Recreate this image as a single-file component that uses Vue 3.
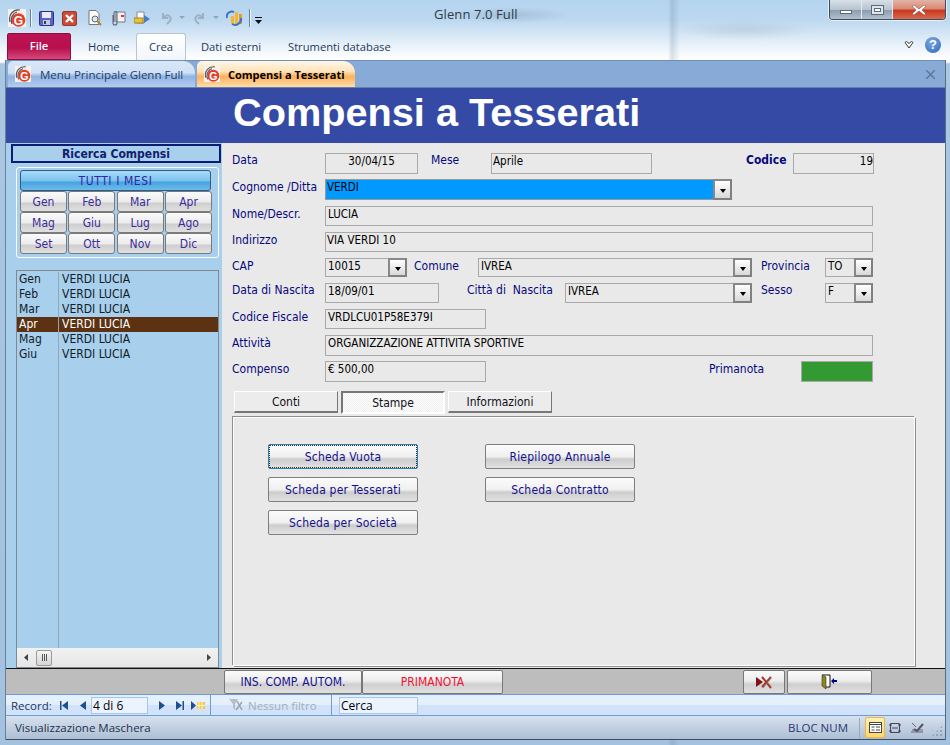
<script setup>
const months = ['Gen','Feb','Mar','Apr','Mag','Giu','Lug','Ago','Set','Ott','Nov','Dic']
const records = [
  { m: 'Gen', n: 'VERDI LUCIA' },
  { m: 'Feb', n: 'VERDI LUCIA' },
  { m: 'Mar', n: 'VERDI LUCIA' },
  { m: 'Apr', n: 'VERDI LUCIA', sel: true },
  { m: 'Mag', n: 'VERDI LUCIA' },
  { m: 'Giu', n: 'VERDI LUCIA' }
]
</script>

<template>
  <div class="window">
    <header class="titlebar">
      <div class="qat">
        <svg class="ic logo" viewBox="0 0 18 18"><rect width="18" height="18" fill="#f4f1ee"/><path d="M2 13C0 6 5 0 12 1M4 15C2 9 5 4 9 3" fill="none" stroke="#555" stroke-width="1.200"/><circle cx="10.500" cy="11" r="6.800" fill="#e0402a"/><text x="10.500" y="15.500" text-anchor="middle" class="g">G</text></svg>
        <i class="sep s1"></i>
        <svg class="ic save" viewBox="0 0 15 15"><rect x=".5" y=".5" width="14" height="14" rx="1" fill="#5a62c8" stroke="#2a2f80"/><rect x="3" y="1" width="9" height="6" fill="#e8ecf8"/><rect x="4" y="9" width="7" height="5" fill="#c6c9d6"/><rect x="5" y="10" width="2" height="3" fill="#33386f"/></svg>
        <svg class="ic del" viewBox="0 0 15 15"><rect x=".5" y=".5" width="14" height="14" rx="1.500" fill="#cf4a36" stroke="#8f3a30"/><path d="M4 4l7 7M11 4l-7 7" stroke="#fff" stroke-width="2.400"/></svg>
        <svg class="ic prev" viewBox="0 0 15 16"><path d="M2 .5h7l3 3v11H2z" fill="#fff" stroke="#777"/><circle cx="8" cy="9" r="3" fill="#dce9f5" stroke="#666"/><path d="M10 11l4 4" stroke="#b8862c" stroke-width="2"/></svg>
        <svg class="ic mail" viewBox="0 0 16 16"><path d="M6 2h9v10H6z" fill="#f4f4f4" stroke="#778"/><path d="M11 5h3v2h-3z" fill="#d33"/><path d="M3 5v8a2 2 0 0 0 4 0V3a1.500 1.500 0 0 0-3 0v9" fill="none" stroke="#667" stroke-width="1.100"/></svg>
        <svg class="ic exp" viewBox="0 0 16 15"><path d="M3 1h7v11H3z" fill="#fff" stroke="#889"/><path d="M10 4l6 4-6 4z" fill="#4a7cc0"/><rect y="7" width="9" height="5" fill="#e9c23d" stroke="#a5801c"/></svg>
        <svg class="ic undo" viewBox="0 0 12 14"><path d="M3 2v5h5M4 6c4-4 8 0 6 4l-3 3" fill="none" stroke="#9fb0c2" stroke-width="2"/></svg>
        <i class="drop d1"></i>
        <svg class="ic redo" viewBox="0 0 12 14"><path d="M9 2v5H4M8 6c-4-4-8 0-6 4l3 3" fill="none" stroke="#9fb0c2" stroke-width="2"/></svg>
        <i class="drop d2"></i>
        <svg class="ic chart" viewBox="0 0 17 17"><rect x="5" y="7" width="3" height="8" fill="#f2b632"/><rect x="9" y="3" width="3" height="12" fill="#f2b632"/><rect x="13" y="5" width="3" height="10" fill="#e89a22"/><path d="M1 9a5 5 0 0 1 7-6M15 9a6 6 0 0 1-9 6" fill="none" stroke="#3d73c4" stroke-width="2"/></svg>
        <i class="sep s2"></i>
        <svg class="ic custom" viewBox="0 0 7 7"><path d="M0 0h7v1H0zM0 3h7L3.500 7z" fill="#111"/></svg>
      </div>
      <div class="wintitle">Glenn 7.0 Full</div>
      <div class="winctl">
        <span class="wbtn min"><i></i></span>
        <span class="wbtn max"><i></i></span>
        <span class="wbtn close"><svg viewBox="0 0 14 10" width="14" height="10"><path d="M2 0l5 4 5-4 2 1-4 4 4 4-2 1-5-4-5 4-2-1 4-4-4-4z" fill="#fff" stroke="#6b3a30" stroke-width=".5"/></svg></span>
      </div>
    </header>

    <nav class="ribbon">
      <span class="file">File</span>
      <span class="rtab home">Home</span>
      <span class="rtab crea">Crea</span>
      <span class="rtab dati">Dati esterni</span>
      <span class="rtab">Strumenti database</span>
      <span class="grow"></span>
      <svg class="heart" viewBox="0 0 10 8" width="10" height="8"><path d="M1 1.500L2.500.5 5 2.500 7.500.5 9 1.500 5 7z" fill="#fff" stroke="#3a3a3a"/></svg>
      <span class="help">?</span>
    </nav>

    <section class="doc">
      <div class="doctabs">
        <div class="dtab off">
          <svg class="ic16" viewBox="0 0 18 18"><rect width="18" height="18" fill="#f4f1ee"/><path d="M2 13C0 6 5 0 12 1M4 15C2 9 5 4 9 3" fill="none" stroke="#555" stroke-width="1.200"/><circle cx="10.500" cy="11" r="6.800" fill="#e0402a"/><text x="10.500" y="15.500" text-anchor="middle" class="g">G</text></svg>
          <span>Menu Principale Glenn Full</span>
        </div>
        <div class="dtab on">
          <svg class="ic16" viewBox="0 0 18 18"><rect width="18" height="18" fill="#f4f1ee"/><path d="M2 13C0 6 5 0 12 1M4 15C2 9 5 4 9 3" fill="none" stroke="#555" stroke-width="1.200"/><circle cx="10.500" cy="11" r="6.800" fill="#e0402a"/><text x="10.500" y="15.500" text-anchor="middle" class="g">G</text></svg>
          <span>Compensi a Tesserati</span>
        </div>
        <span class="grow"></span>
        <svg class="docx" viewBox="0 0 9 9" width="9" height="9"><path d="M0 0l9 9M9 0L0 9" stroke="#5f7897" stroke-width="1.500"/></svg>
      </div>

      <h1 class="banner">Compensi a Tesserati</h1>

      <div class="main">
        <aside class="left">
          <div class="lhead">Ricerca Compensi</div>
          <div class="filter">
            <button class="allbtn">TUTTI I MESI</button>
            <div class="mgrid">
              <button v-for="m in months" :key="m" class="mbtn">{{ m }}</button>
            </div>
          </div>
          <div class="list">
            <div class="rows">
              <div v-for="r in records" :key="r.m" class="row" :class="{ sel: r.sel }">
                <span class="rm">{{ r.m }}</span><span class="rn">{{ r.n }}</span>
              </div>
              <div class="rfill"><span class="rm"></span></div>
            </div>
            <div class="hscroll">
              <svg viewBox="0 0 4 7" width="4" height="7"><path d="M4 0v7L0 3.500z" fill="#444"/></svg>
              <span class="thumb"><i></i><i></i><i></i></span>
              <span class="grow"></span>
              <svg viewBox="0 0 4 7" width="4" height="7"><path d="M0 0v7l4-3.500z" fill="#444"/></svg>
            </div>
          </div>
        </aside>

        <div class="right">
          <div class="frow r1">
            <label class="lab">Data</label>
            <span class="fld w93 center">30/04/15</span>
            <label class="lab mese">Mese</label>
            <span class="fld w161 tight">Aprile</span>
            <label class="lab cod">Codice</label>
            <span class="fld w81 end">19</span>
          </div>
          <div class="frow r2">
            <label class="lab">Cognome /Ditta</label>
            <span class="fld combo w407 hot tight">VERDI<b class="arr"><i></i></b></span>
          </div>
          <div class="frow r3">
            <label class="lab">Nome/Descr.</label>
            <span class="fld w548">LUCIA</span>
          </div>
          <div class="frow r4">
            <label class="lab">Indirizzo</label>
            <span class="fld w548 tight">VIA VERDI 10</span>
          </div>
          <div class="frow r5">
            <label class="lab">CAP</label>
            <span class="fld combo w82">10015<b class="arr"><i></i></b></span>
            <label class="lab comune">Comune</label>
            <span class="fld combo w274">IVREA<b class="arr"><i></i></b></span>
            <label class="lab prov">Provincia</label>
            <span class="fld combo w48">TO<b class="arr"><i></i></b></span>
          </div>
          <div class="frow r6">
            <label class="lab">Data di Nascita</label>
            <span class="fld w114">18/09/01</span>
            <label class="lab citta">Città di&nbsp; Nascita</label>
            <span class="fld combo w187">IVREA<b class="arr"><i></i></b></span>
            <label class="lab prov">Sesso</label>
            <span class="fld combo w48">F<b class="arr"><i></i></b></span>
          </div>
          <div class="frow r7">
            <label class="lab">Codice Fiscale</label>
            <span class="fld w161">VRDLCU01P58E379I</span>
          </div>
          <div class="frow r8">
            <label class="lab">Attività</label>
            <span class="fld w548">ORGANIZZAZIONE ATTIVITA SPORTIVE</span>
          </div>
          <div class="frow r9">
            <label class="lab">Compenso</label>
            <span class="fld w161">€ 500,00</span>
            <label class="lab pnota">Primanota</label>
            <span class="green"></span>
          </div>

          <div class="ftabs">
            <span class="ftab">Conti</span>
            <span class="ftab act">Stampe</span>
            <span class="ftab">Informazioni</span>
          </div>
          <div class="fpanel">
            <div class="pcol">
              <button class="pbtn focus">Scheda Vuota</button>
              <button class="pbtn">Scheda per Tesserati</button>
              <button class="pbtn">Scheda per Società</button>
            </div>
            <div class="pcol">
              <button class="pbtn">Riepilogo Annuale</button>
              <button class="pbtn">Scheda Contratto</button>
            </div>
          </div>
        </div>
      </div>

      <div class="band">
        <button class="bbtn ins">INS. COMP. AUTOM.</button>
        <button class="bbtn prim">PRIMANOTA</button>
        <span class="grow"></span>
        <button class="bbtn bx">
          <svg viewBox="0 0 16 13" width="16" height="13"><path d="M0 1l7 5-7 5z" fill="#7f1414"/><path d="M6 11L15 1M6 1l9 11" stroke="#a33" stroke-width="2"/><path d="M7 12L15 2" stroke="#777" stroke-width="1"/></svg>
        </button>
        <button class="bbtn bexit">
          <svg viewBox="0 0 17 16" width="17" height="16"><path d="M1 1h8v12H4" fill="#fff" stroke="#111"/><path d="M1 1l4 2v12l-4-3z" fill="#8a8a18" stroke="#333" stroke-width=".6"/><path d="M10 7l3-3v2h3v2h-3v2z" fill="#00008b"/></svg>
        </button>
      </div>

      <div class="recbar">
        <div class="rnav">
          <span class="rl">Record:</span>
          <svg class="n n1" viewBox="0 0 8 9" width="8" height="9"><path d="M0 0h1.500v9H0zM8 0v9L2 4.500z" fill="#1f4f8f"/></svg>
          <svg class="n n2" viewBox="0 0 6 9" width="6" height="9"><path d="M6 0v9L0 4.500z" fill="#1f4f8f"/></svg>
          <span class="rinput">4 di 6</span>
          <svg class="n n3" viewBox="0 0 6 9" width="6" height="9"><path d="M0 0v9l6-4.500z" fill="#1f4f8f"/></svg>
          <svg class="n n4" viewBox="0 0 8 9" width="8" height="9"><path d="M0 0v9l6-4.500zM6.500 0H8v9H6.500z" fill="#1f4f8f"/></svg>
          <svg class="n n5" viewBox="0 0 14 9" width="14" height="9"><path d="M0 0v9l5-4.500z" fill="#1f4f8f"/><path d="M6 1h8v7H6z" fill="#efc94a"/><path d="M8 1v7M11 1v7M6 4.500h8" stroke="#fff6c8"/></svg>
        </div>
        <div class="rfilter">
          <svg viewBox="0 0 15 14" width="15" height="14"><path d="M1 1h9L7 6v6L5 10V6z" fill="#b5bdc7"/><path d="M9 3l5 9M14 4l-6 8" stroke="#99a3ae" stroke-width="1.500"/></svg>
          <span>Nessun filtro</span>
        </div>
        <div class="rsearch"><span>Cerca</span></div>
      </div>

      <footer class="status">
        <span class="stxt">Visualizzazione Maschera</span>
        <span class="grow"></span>
        <span class="blocnum">BLOC NUM</span>
        <span class="vsel">
          <svg viewBox="0 0 13 11" width="13" height="11"><rect x=".5" y=".5" width="12" height="10" fill="#fff" stroke="#444"/><path d="M.5 2.500h12M2.500 5h3M2.500 8h3M7 5h4M7 8h4" stroke="#444"/></svg>
        </span>
        <svg class="v2" viewBox="0 0 12 12" width="12" height="12"><path d="M1.500 1.500h9v9h-9z" fill="none" stroke="#445"/><path d="M0 3h3M9 3h3M0 9h3M9 9h3M3 6h6" stroke="#445"/></svg>
        <svg class="v3" viewBox="0 0 13 12" width="13" height="12"><path d="M1 1l4 4M0 10h12M1 8h11" stroke="#667" fill="none"/><path d="M3 7l3 2 6-7" stroke="#556" stroke-width="2" fill="none"/></svg>
        <i class="grip"></i>
      </footer>
    </section>
  </div>
</template>

<style scoped>
* { box-sizing: border-box; }
.window {
  width: 950px; height: 745px; overflow: hidden; display: flex; flex-direction: column;
  padding: 0 4px 0 6px;
  font-family: "DejaVu Sans Condensed", "DejaVu Sans", sans-serif;
  background:
    radial-gradient(ellipse 60px 8px at 510px 15px, rgba(90,110,130,.22), transparent),
    radial-gradient(ellipse 70px 10px at 745px 30px, rgba(90,110,130,.14), transparent),
    linear-gradient(90deg, transparent 668px, rgba(90,120,150,.22) 672px, transparent 680px),
    linear-gradient(180deg, #b5d4ee 0, #bcd8f0 20px, #d8e8f6 36px, #f4f8fc 52px, #ffffff 60px, #ffffff 62px, #a9c6e2 64px, #a3c2df 100%);
}
.grow { flex: 1; }
.titlebar { height: 32px; display: flex; position: relative; flex: none; }
.qat { width: 300px; position: relative; margin-left: -6px; }
.ic { position: absolute; }
.logo { left: 8px; top: 9px; width: 18px; height: 18px; }
.g { font: bold 12px "Liberation Sans", sans-serif; fill: #fff; }
.sep { position: absolute; width: 1px; background: #6d8198; box-shadow: 1px 0 0 #e8f2fb; top: 9px; height: 18px; }
.s1 { left: 30px; } .s2 { left: 249px; }
.save { left: 39px; top: 11px; width: 15px; height: 15px; }
.del { left: 62px; top: 11px; width: 15px; height: 15px; }
.prev { left: 87px; top: 10px; width: 15px; height: 16px; }
.mail { left: 110px; top: 10px; width: 16px; height: 16px; }
.exp { left: 134px; top: 11px; width: 16px; height: 15px; }
.undo { left: 160px; top: 11px; width: 12px; height: 14px; }
.redo { left: 194px; top: 11px; width: 12px; height: 14px; }
.chart { left: 226px; top: 9px; width: 17px; height: 17px; }
.custom { left: 255px; top: 17px; width: 7px; height: 7px; }
.drop { position: absolute; top: 16px; border: 3px solid transparent; border-top-color: #93a5b8; }
.d1 { left: 179px; } .d2 { left: 213px; }
.wintitle { position: absolute; left: 428px; top: 5px; font: 13px "Open Sans", sans-serif; color: #2a3a4a; letter-spacing: .1px; }
.winctl { position: absolute; right: 0; top: 0; width: 117px; height: 20px; display: flex; border: 1px solid #3f4b58; border-top: 0; border-radius: 0 0 4px 4px; overflow: hidden; box-shadow: 0 0 0 1px rgba(255,255,255,.6); }
.wbtn { display: flex; align-items: center; justify-content: center; background: linear-gradient(180deg, #d8e0e8, #b6c3d0 50%, #8d9eb0 55%, #b3c0cc); border-right: 1px solid #e3e9ef; }
.min { width: 32px; } .max { width: 31px; }
.close { flex: 1; background: linear-gradient(180deg, #e3b4a8, #d98a76 45%, #c9391f 55%, #d9694f); border: 0; }
.min i { width: 12px; height: 4px; background: #fff; border: 1px solid #5b6a7a; margin-top: 5px; }
.max i { width: 13px; height: 10px; background: #fff; border: 1px solid #5b6a7a; box-shadow: inset 0 0 0 2px #dfe6ee, inset 0 0 0 3px #5b6a7a; }

.ribbon { height: 28px; flex: none; display: flex; align-items: center; position: relative; font: 11.200px "Open Sans", sans-serif; color: #1e395b; padding-left: 1px; }
.file { width: 64px; height: 27px; margin-top: 1px; border-radius: 2px 2px 0 0; border: 1px solid #8f0c3c; background: linear-gradient(180deg, #bb1654 0, #b80f4e 55%, #d44a7a 100%); color: #fff; text-align: center; line-height: 23px; font-weight: 600; }
.rtab { white-space: nowrap; }
.home { margin-left: 17px; width: 48px; }
.crea { width: 50px; height: 27px; margin-top: 1px; text-align: center; line-height: 25px; border: 1px solid #b8c4d0; border-bottom: 0; border-radius: 3px 3px 0 0; background: linear-gradient(180deg, #fff, #f2f6fb); margin-right: 15px; }
.dati { width: 87px; }
.heart { margin-right: 11px; margin-top: -2px; }
.help { width: 16px; height: 16px; margin-right: 5px; margin-top: -2px; border-radius: 50%; background: radial-gradient(circle at 40% 30%, #78a6e2, #2f68bd); color: #fff; text-align: center; font: bold 13px/16px "Liberation Sans", sans-serif; }

.doc { flex: 1; min-height: 0; display: flex; flex-direction: column; margin-bottom: 5px; background: #a8cfeb; border-right: 1px solid #5a6c80; box-shadow: -1px 0 0 #6c8199; }
.doctabs { height: 28px; flex: none; display: flex; align-items: flex-end; background: #88aad6; border-top: 1px solid #6c8fb8; border-bottom: 1px solid #6782a6; padding: 0 0 0 2px; font: 11px "Open Sans", sans-serif; }
.dtab { height: 26px; display: flex; align-items: center; gap: 8px; padding-left: 7px; margin-right: 2px; border-radius: 5px 12px 0 0; white-space: nowrap; }
.ic16 { width: 16px; height: 16px; flex: none; }
.off { width: 187px; gap: 9px; color: #24406c; background: linear-gradient(180deg, #d9e7f7 0, #cfe1f5 45%, #8fb3e3 60%, #b5cdee 100%); font-size: 11.500px; }
.on { width: 158px; color: #000; font-weight: 700; background: linear-gradient(180deg, #fff7e8 0, #ffe3b8 40%, #fdb25c 60%, #fedcab 100%); }
.docx { margin-right: 10px; margin-bottom: 8px; }
.banner { height: 55px; flex: none; margin: 0; background: #344aa5; color: #fff; font: bold 39.700px/49px "Liberation Sans", sans-serif; padding-left: 227px; }

.main { flex: 1; min-height: 0; display: flex; }
.left { width: 216px; flex: none; padding: 1px 0 0 5px; display: flex; flex-direction: column; background: #a8cfeb; }
.lhead { height: 19px; width: 210px; border: 2px solid #0c1c6e; font: bold 12px/16px "DejaVu Sans Condensed", sans-serif; color: #14206f; text-align: center; }
.filter { width: 203px; height: 91px; margin: 4px 0 0 5px; border: 1px solid #fff; border-radius: 3px; padding: 2px 3px 0 3px; }
.allbtn { display: block; width: 191px; height: 21px; padding: 0; border: 1px solid #2c5d86; border-radius: 3px; font: 12px "DejaVu Sans Condensed", sans-serif; letter-spacing: .6px; color: #3226a6; background: linear-gradient(180deg, #a8dcf8, #7cc3ee 50%, #49a3df 60%, #6cbceb); }
.mgrid { display: grid; grid-template-columns: repeat(4, 47px); grid-auto-rows: 21px; column-gap: 1.330px; margin-top: 0; }
.mbtn { padding: 0; border: 1px solid #7a7a7a; border-radius: 3px; font: 12px "DejaVu Sans Condensed", sans-serif; color: #3a2c9c; background: linear-gradient(180deg, #fafafa, #ececec 50%, #cfcfcf 60%, #e0e0e0); }
.list { width: 203px; height: 398px; margin: 12px 0 0 5px; border: 1px solid #808890; display: flex; flex-direction: column; color: #10202a; font-size: 12px; }
.rows { flex: 1; min-height: 0; display: flex; flex-direction: column; padding-top: 1px; }
.row { height: 15px; flex: none; display: flex; line-height: 15px; }
.rm { width: 42px; padding-left: 2px; border-right: 1px solid #93a8b5; flex: none; }
.rn { padding-left: 3px; }
.rfill { flex: 1; display: flex; }
.sel { background: #5c3213; color: #fff; }
.hscroll { height: 19px; flex: none; background: linear-gradient(180deg, #f2f2f2, #e6e6e6); display: flex; align-items: center; padding: 0 7px 0 7px; }
.thumb { width: 16px; height: 16px; margin-left: 8px; background: linear-gradient(180deg, #f6f6f6, #d4d4d4); border: 1px solid #9a9a9a; border-radius: 2px; display: flex; gap: 1px; align-items: center; justify-content: center; }
.thumb i { width: 1px; height: 7px; background: #555; }

.right { flex: 1; background: #e9e9e9; padding: 10px 0 0 10px; min-width: 0; color: #000; font-size: 12px; }
.frow { display: flex; }
.r1 { height: 21px; } .r2 { height: 21px; margin-top: 5px; } .r3 { height: 20px; margin-top: 6px; }
.r4 { height: 20px; margin-top: 6px; } .r5 { height: 19px; margin-top: 6px; } .r6 { height: 20px; margin-top: 6px; }
.r7 { height: 20px; margin-top: 6px; } .r8 { height: 21px; margin-top: 6px; } .r9 { height: 21px; margin-top: 5px; }
.lab { width: 93px; flex: none; color: #08087e; line-height: 17px; white-space: nowrap; }
.r1 .lab, .r6 .lab { line-height: 15px; }
.mese { margin-left: 13px; width: 60px; }
.cod { margin-left: 94px; width: 47px; font-weight: 700; }
.comune { margin-left: 7px; width: 64px; }
.citta { margin-left: 28px; width: 98px; }
.prov { margin-left: 9px; width: 64px; }
.pnota { margin-left: 223px; width: 92px; }
.fld { display: block; position: relative; height: 100%; flex: none; border: 1px solid #a9a9a9; padding: 0 2px; line-height: 14px; white-space: nowrap; font-size: 11.500px; }
.tight { padding-left: 1px; }
.center { text-align: center; } .end { text-align: right; padding-right: 0; }
.w93 { width: 93px; } .w161 { width: 161px; } .w81 { width: 81px; } .w407 { width: 407px; } .w548 { width: 548px; }
.w82 { width: 82px; } .w274 { width: 274px; } .w48 { width: 48px; } .w114 { width: 114px; } .w187 { width: 187px; }
.hot { background: #0099ff; border: 1px solid #999; }
.combo { border-right: 0; }
.arr { position: absolute; right: 0; top: -1px; bottom: -1px; width: 19px; display: flex; align-items: center; justify-content: center; border: 2px solid #888; border-color: #888 #808080 #808080 #888; background: linear-gradient(180deg, #fff, #ececec 50%, #d8d8d8); }
.arr i { border: 3.500px solid transparent; border-top: 4px solid #000; border-bottom: 0; margin-top: 2px; }
.green { width: 72px; height: 21px; background: #339933; border: 1px solid #a9a9a9; }

.ftabs { display: flex; gap: 3px; margin: 9px 0 0 2px; height: 23px; }
.ftab { width: 104px; height: 22px; text-align: center; line-height: 20px; color: #101020; background: #ececec; border: 1px solid #fff; border-right: 1px solid #777; border-bottom: 2px solid #777; }
.act { background: repeating-conic-gradient(#fff 0 25%, #eee 0 50%) 0 0 / 2px 2px; border: 2px solid #777; border-right-color: #fff; border-bottom-color: #fff; line-height: 21px; height: 23px; }
.fpanel { width: 682px; height: 249px; margin: 3px 0 0 1px; border: 1px solid #fff; box-shadow: -1px -1px 0 #8f8f8f, 1px 1px 0 #8f8f8f; display: flex; gap: 67px; padding: 26px 0 0 34px; }
.pcol { display: flex; flex-direction: column; gap: 8px; }
.pbtn { width: 150px; height: 25px; padding: 0; border: 1px solid #7e7e7e; border-radius: 2px; font: 12px "DejaVu Sans Condensed", sans-serif; letter-spacing: .2px; color: #14108c; background: linear-gradient(180deg, #fbfbfb, #f0f0f0 50%, #cdcdcd 62%, #e2e2e2); }
.focus { border-color: #2a7fb8; outline: 1px dotted #333; outline-offset: -2px; }

.band { height: 26px; flex: none; display: flex; background: #bdbdbd; border-top: 1px solid #111; padding: 1px 73px 0 218px; }
.bbtn { height: 24px; padding: 0; border: 1px solid #777; border-radius: 2px; font: 12px "DejaVu Sans Condensed", sans-serif; display: flex; align-items: center; justify-content: center; background: linear-gradient(180deg, #fbfbfb, #ececec 45%, #cfcfcf 60%, #e0e0e0); }
.ins { width: 138px; color: #14108c; }
.prim { width: 141px; color: #f01030; }
.bx { width: 42px; }
.bexit { width: 85px; margin-left: 2px; }

.recbar { height: 22px; flex: none; display: flex; background: linear-gradient(180deg, #e4f0fe 50%, #d0e3fb 50%); border: 1px solid #6f9ad2; border-width: 1px 0; font: 11.500px "Open Sans", sans-serif; color: #1e395b; }
.rnav { width: 205px; display: flex; align-items: center; position: relative; padding-left: 5px; border-right: 1px solid #6f9ad2; }
.rl { width: 42px; }
.n { position: absolute; top: 6px; }
.n1 { left: 54px; } .n2 { left: 74px; } .n3 { left: 153px; } .n4 { left: 170px; } .n5 { left: 185px; }
.rinput { position: absolute; left: 85px; top: 2px; width: 57px; height: 17px; background: #eaf3fe; border: 1px solid #a9c4e6; padding-left: 1px; line-height: 15px; color: #000; font-size: 12px; }
.rfilter { width: 121px; display: flex; align-items: center; gap: 5px; padding-left: 17px; color: #a5aeb8; border-right: 1px solid #6f9ad2; white-space: nowrap; }
.rsearch { padding: 2px 0 0 7px; }
.rsearch span { display: block; width: 79px; height: 17px; background: #eaf3fe; border: 1px solid #a9c4e6; padding-left: 1px; line-height: 15px; color: #000; font-size: 12px; }

.status { height: 24px; flex: none; display: flex; align-items: center; position: relative; background: linear-gradient(180deg, #d5e1ef, #aebfd4); border-bottom: 1px solid #3e4c5c; font: 11.500px "Open Sans", sans-serif; color: #24304c; padding-left: 9px; }
.blocnum { font-size: 11.500px; padding-right: 11px; color: #2a3770; border-right: 1px solid #9aaabd; line-height: 20px; }
.vsel { width: 20px; height: 21px; margin: 0 4px 0 5px; display: flex; align-items: center; justify-content: center; border: 1px solid #e8b84f; border-radius: 2px; background: linear-gradient(180deg, #fff0b4, #ffd66a); }
.v2 { margin-right: 10px; }
.v3 { margin-right: 21px; }
.grip { position: absolute; right: 2px; bottom: 2px; width: 12px; height: 12px; background: radial-gradient(circle, #8ea2ba 1px, transparent 1.200px) 0 0 / 4px 4px; clip-path: polygon(100% 0, 100% 100%, 0 100%); }
</style>
